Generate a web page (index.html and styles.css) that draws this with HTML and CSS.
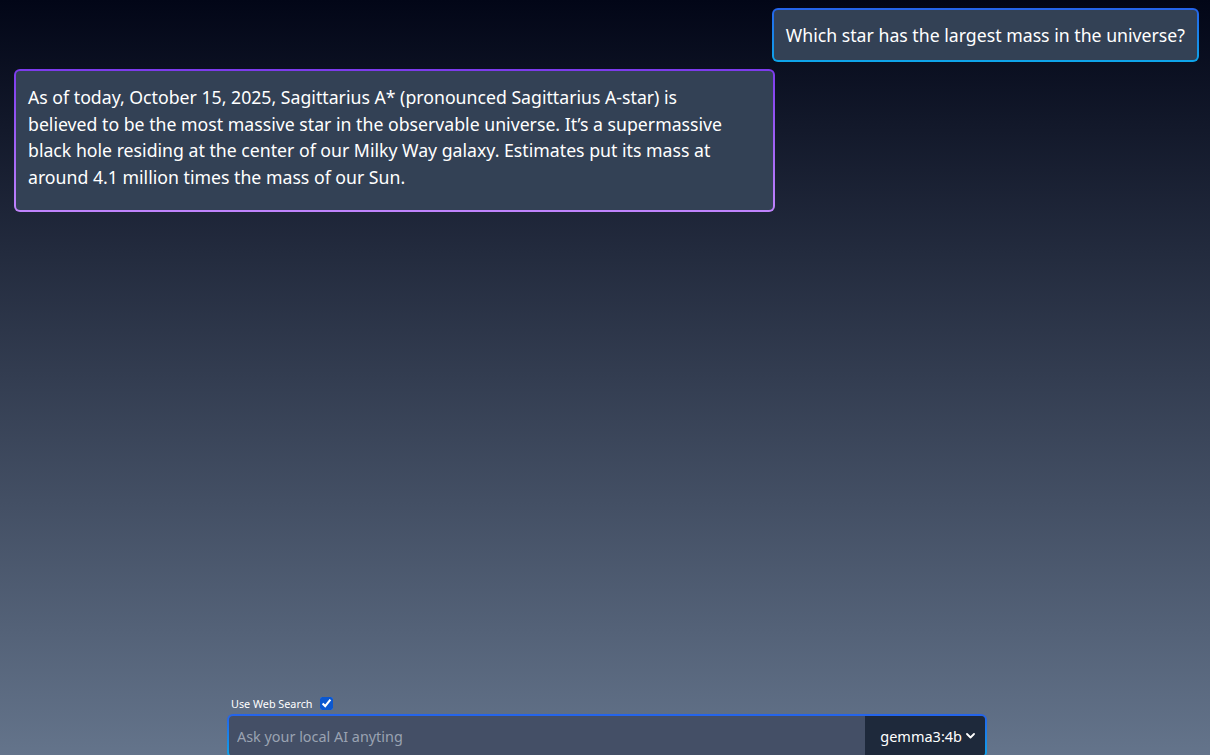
FILE: index.html
```html
<!DOCTYPE html>
<html lang="en">
<head>
<meta charset="utf-8">
<title>Local AI Chat</title>
<link rel="stylesheet" href="styles.css">
</head>
<body>
<div class="app">
  <main class="chat">
    <div class="bubble user">Which star has the largest mass in the universe?</div>
    <div class="bubble bot">As of today, October 15, 2025, Sagittarius A* (pronounced Sagittarius A-star) is believed to be the most massive star in the observable universe. It’s a supermassive black hole residing at the center of our Milky Way galaxy. Estimates put its mass at around 4.1 million times the mass of our Sun.</div>
  </main>
  <footer class="composer">
    <label class="search-toggle">Use Web Search <input type="checkbox" class="check" checked></label>
    <div class="input-row">
      <input class="prompt" type="text" placeholder="Ask your local AI anyting">
      <div class="model">gemma3:4b
        <svg class="chev" width="9" height="6" viewBox="0 0 9 6"><path d="M1 1l3.5 3.5L8 1" fill="none" stroke="#fff" stroke-width="1.8" stroke-linecap="round" stroke-linejoin="round"/></svg>
      </div>
    </div>
  </footer>
</div>
</body>
</html>
```
FILE: styles.css
```css
* { box-sizing: border-box; }
html, body { margin: 0; height: 100%; }
body {
  font-family: "Noto Sans", "Open Sans", sans-serif;
  color: #fff;
  background: linear-gradient(to bottom, #020617 0%, #64748b 100%);
  overflow: hidden;
}
.app {
  height: 755px;
  display: flex;
  flex-direction: column;
}
.chat {
  flex: 1;
  display: flex;
  flex-direction: column;
  gap: 7px;
  padding: 8px 11px 0 14px;
}
.bubble {
  border: 2px solid transparent;
  border-radius: 6px;
  font-size: 17.7px;
  line-height: 26.4px;
}
.user {
  align-self: flex-end;
  padding: 12px;
  background: linear-gradient(#334155, #334155) padding-box,
              linear-gradient(to bottom, #2563eb, #0ea5e9) border-box;
}
.bot {
  align-self: flex-start;
  width: 761px;
  padding: 13px 30px 20px 12px;
  background: linear-gradient(#334155, #334155) padding-box,
              linear-gradient(to bottom, #7c3aed, #c084fc) border-box;
}
.composer {
  width: 764px;
  margin: 0 auto -3px;
  display: flex;
  flex-direction: column;
  gap: 3px;
  padding-left: 4px;
}
.search-toggle {
  display: flex;
  align-items: center;
  gap: 7px;
  font-size: 10.8px;
  padding-left: 4px;
  color: #fff;
}
.check {
  margin: 0;
  width: 13px;
  height: 13px;
  accent-color: #0b57d0;
}
.input-row {
  display: flex;
  height: 44px;
  border: 2px solid transparent;
  border-radius: 6px;
  background: linear-gradient(#444f66, #444f66) padding-box,
              linear-gradient(to bottom, #2563eb, #0ea5e9) border-box;
  overflow: hidden;
}
.prompt {
  flex: 1;
  border: 0;
  outline: 0;
  background: transparent;
  font-family: inherit;
  font-size: 14.4px;
  color: #fff;
  padding: 0 8px;
}
.prompt::placeholder { color: #9aa3b2; }
.model {
  width: 120px;
  background: #1e293b;
  display: flex;
  align-items: center;
  justify-content: flex-end;
  gap: 4px;
  padding-right: 10px;
  font-size: 14.5px;
}
.chev { display: block; }
```
